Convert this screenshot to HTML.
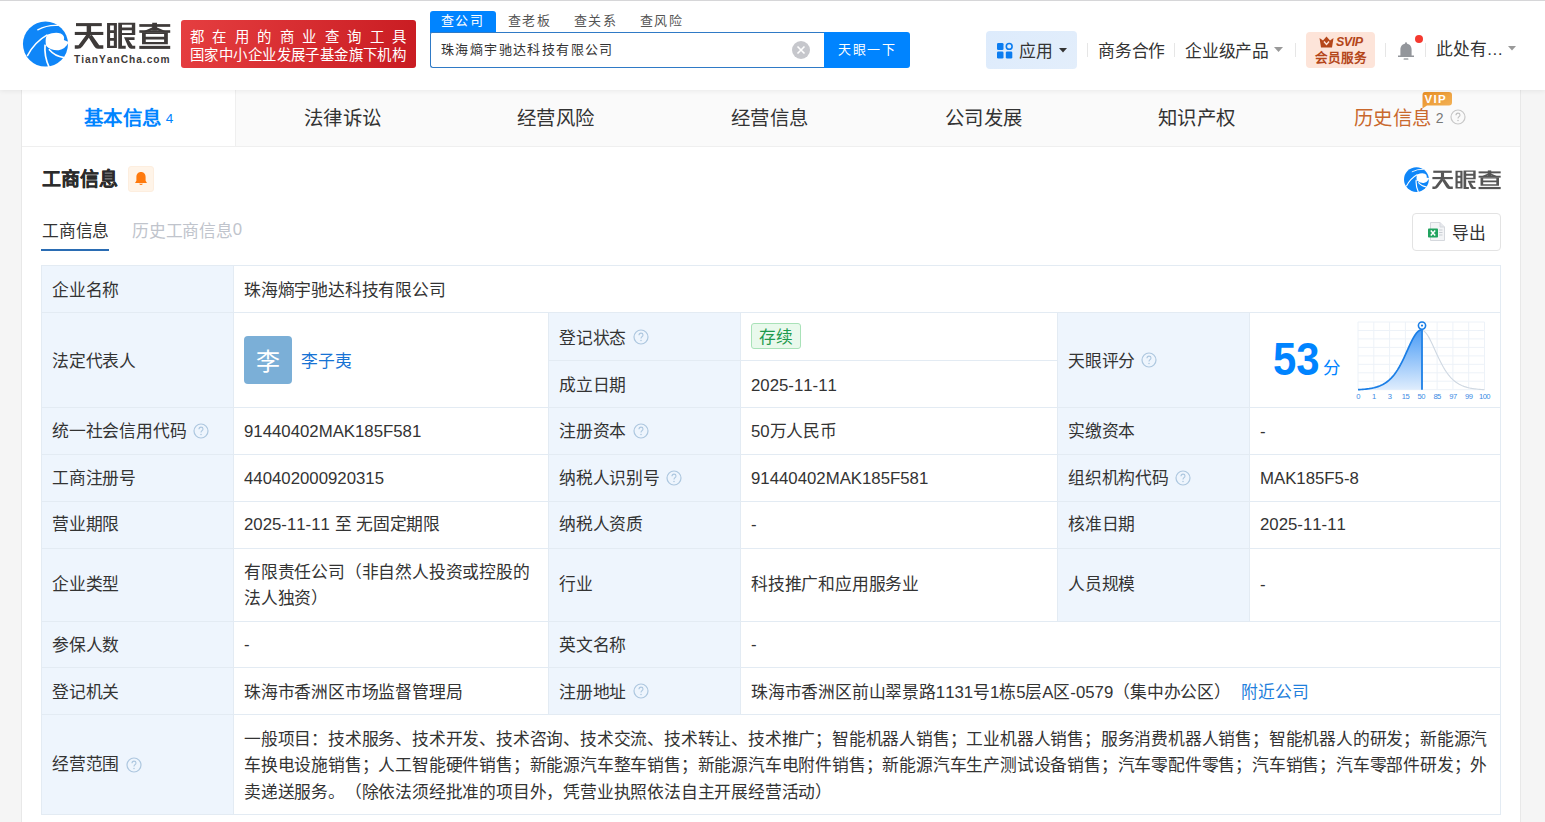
<!DOCTYPE html><html lang="zh-CN"><head><meta charset="utf-8"><title>天眼查</title><style>
*{margin:0;padding:0;box-sizing:border-box}
html,body{width:1545px;height:822px;overflow:hidden}
body{position:relative;background:#f5f5f5;text-spacing-trim:space-all;font-kerning:none;font-family:"Liberation Sans",sans-serif;color:#333;}
.a{position:absolute;white-space:nowrap}
.hdr{position:absolute;left:0;top:0;width:1545px;height:90px;background:#fff;box-shadow:0 1px 5px rgba(0,0,0,0.07);z-index:5}
.topl{position:absolute;left:0;top:0;width:1545px;height:1px;background:#d6d6d8;z-index:6}
.card{position:absolute;left:21px;top:90px;width:1500px;height:740px;background:#fff;border-left:1px solid #e8e8e8;border-right:1px solid #e8e8e8}
.lbl{position:absolute;background:#eef5fd}
.ln{position:absolute;background:#e3ebf3}
.q{position:absolute;width:16px;height:16px;border:1.2px solid #b9d1e8;border-radius:50%}
.q:after{content:"?";position:absolute;left:0;top:0;width:100%;text-align:center;font-size:11px;line-height:13.5px;color:#b9d1e8}
.t{position:absolute;white-space:nowrap;font-size:16.8px;line-height:20px;color:#333}
.c{letter-spacing:-0.2px;position:relative;top:1.5px}
.ct{letter-spacing:-0.2px;position:relative;top:0.3px}
.sep{position:absolute;width:1px;height:14px;background:#e6e6e6;top:43px}
</style></head><body>
<div class="hdr">
<div class="topl"></div>
<svg class="a" style="left:18px;top:17px" width="56" height="54" viewBox="0 0 852 822">
<circle cx="418" cy="412" r="343" fill="#0f86f8"/>
<path d="M300 195 Q450 115 610 128" stroke="#fff" stroke-width="20" fill="none" stroke-linecap="round"/>
<path d="M440 272 Q560 222 650 250 Q718 280 698 352 L770 380 L770 390 Q720 490 620 505 Q510 515 430 440 Q405 360 440 272 Z" fill="#fff"/>
<path d="M140 595 Q250 380 445 272" stroke="#fff" stroke-width="24" fill="none"/>
<path d="M412 420 Q395 600 475 765" stroke="#fff" stroke-width="26" fill="none"/>
<path d="M470 492 Q560 600 700 618" stroke="#fff" stroke-width="24" fill="none"/>
</svg>
<svg class="a" style="left:70px;top:18px" width="105" height="50" viewBox="0 0 1545 736"><g fill="#3e3a39">
<rect x="88" y="75" width="380" height="45"/>
<rect x="70" y="205" width="420" height="45"/>
<rect x="245" y="110" width="65" height="110"/>
<path d="M245 240 L315 240 L185 415 Q160 452 115 452 L70 452 L70 402 L125 402 Z"/>
<path d="M270 280 L320 245 L430 402 L490 402 L490 452 L410 452 Q380 452 355 415 Z"/>
<path fill-rule="evenodd" d="M545 75 H690 V440 H545 Z M590 110 V180 H645 V110 Z M590 220 V295 H645 V220 Z M590 335 V410 H645 V335 Z"/>
<path fill-rule="evenodd" d="M710 70 H960 V250 H765 V410 H820 V452 H710 Z M765 100 V140 H910 V100 Z M765 180 V220 H910 V180 Z"/>
<path d="M795 282 H950 V322 H865 L920 410 H960 V452 H900 Q875 452 855 420 Z"/>
<rect x="1020" y="90" width="455" height="40"/>
<rect x="1210" y="70" width="70" height="115"/>
<path d="M1215 135 L1255 160 L1120 212 L1040 212 Z"/>
<path d="M1275 135 L1235 160 L1370 212 L1450 212 Z"/>
<rect x="1020" y="180" width="455" height="38"/>
<path fill-rule="evenodd" d="M1060 215 H1440 V385 H1060 Z M1115 235 V275 H1385 V235 Z M1115 315 V355 H1385 V315 Z"/>
<rect x="1020" y="410" width="455" height="45"/>
</g></svg>
<div class="a" style="left:74px;top:53.5px;font-size:10.2px;line-height:12px;font-weight:bold;color:#3e3a39;letter-spacing:1.0px">TianYanCha.com</div>
<div class="a" style="left:181px;top:20px;width:235px;height:48px;border-radius:3px;background:linear-gradient(100deg,#e53e40,#c91c22)"></div>
<div class="a" style="left:190px;top:28px;width:216px;font-size:14.4px;line-height:19px;color:#fff;text-align:justify;text-align-last:justify">都 在 用 的 商 业 查 询 工 具</div>
<div class="a" style="left:190px;top:45.5px;font-size:14.4px;line-height:19px;color:#fff;letter-spacing:0.42px">国家中小企业发展子基金旗下机构</div>
<div class="a" style="left:430px;top:11px;width:66px;height:22px;background:#0084ff;border-radius:3px 3px 0 0"></div>
<div class="a" style="left:441px;top:11px;font-size:13px;letter-spacing:1.4px;line-height:20px;color:#fff">查公司</div>
<div class="a" style="left:508px;top:11px;font-size:13px;letter-spacing:1.4px;line-height:20px;color:#555">查老板</div>
<div class="a" style="left:574px;top:11px;font-size:13px;letter-spacing:1.4px;line-height:20px;color:#555">查关系</div>
<div class="a" style="left:640px;top:11px;font-size:13px;letter-spacing:1.4px;line-height:20px;color:#555">查风险</div>
<div class="a" style="left:430px;top:32px;width:395px;height:36px;border:1px solid #2f7ac6;border-right:none;border-radius:2px 0 0 3px;background:#fff"></div>
<div class="a" style="left:441px;top:40px;font-size:13px;letter-spacing:1.4px;line-height:20px;color:#333">珠海熵宇驰达科技有限公司</div>
<div class="a" style="left:792px;top:41px;width:18px;height:18px;border-radius:50%;background:#c6c7cc"></div>
<svg class="a" style="left:792px;top:41px" width="18" height="18"><path d="M5.5 5.5 L12.5 12.5 M12.5 5.5 L5.5 12.5" stroke="#fff" stroke-width="1.6"/></svg>
<div class="a" style="left:824px;top:32px;width:86px;height:36px;background:#0084ff;border-radius:0 3px 3px 0"></div>
<div class="a" style="left:838px;top:40px;font-size:13px;letter-spacing:1.6px;line-height:20px;color:#fff">天眼一下</div>
<div class="a" style="left:986px;top:31px;width:91px;height:38px;border-radius:4px;background:linear-gradient(135deg,#ddebfc,#e3eefb)"></div>
<svg class="a" style="left:996px;top:42px" width="18" height="17" viewBox="0 0 18 17">
<rect x="1" y="1" width="6.5" height="7" rx="1.3" fill="#0b7cf0"/>
<circle cx="13.2" cy="4.4" r="2.9" fill="none" stroke="#0b7cf0" stroke-width="1.6"/>
<rect x="1" y="9.5" width="6.5" height="7" rx="1.3" fill="#0b7cf0"/>
<rect x="9.8" y="9.5" width="6.5" height="7" rx="1.3" fill="#0b7cf0"/>
</svg>
<div class="a" style="left:1019px;top:40px;font-size:16.8px;line-height:20px;color:#333"><span class="c">应用</span></div>
<svg class="a" style="left:1059px;top:47.5px" width="8" height="5"><path d="M0 0 H8 L4 4.5 Z" fill="#333"/></svg>
<div class="sep" style="left:1087px"></div>
<div class="a" style="left:1098px;top:40px;font-size:16.8px;line-height:20px;color:#333"><span class="c">商务合作</span></div>
<div class="sep" style="left:1174px"></div>
<div class="a" style="left:1185px;top:40px;font-size:16.8px;line-height:20px;color:#333"><span class="c">企业级产品</span></div>
<svg class="a" style="left:1274px;top:47px" width="9" height="5"><path d="M0 0 H9 L4.5 5 Z" fill="#999"/></svg>
<div class="sep" style="left:1295px"></div>
<div class="a" style="left:1306px;top:32px;width:69px;height:36px;border-radius:4px;background:#fde4d9"></div>
<svg class="a" style="left:1319px;top:36px" width="15" height="12" viewBox="0 0 15 12">
<path d="M0.5 2 L4 4.5 L7.5 0.5 L11 4.5 L14.5 2 L13 11.5 H2 Z" fill="#b4461a"/>
<path d="M5 5.5 L7.5 8.5 L10 5.5" stroke="#fde4d9" stroke-width="1.4" fill="none"/>
</svg>
<div class="a" style="left:1336px;top:35px;font-size:12.5px;line-height:14px;font-weight:bold;font-style:italic;color:#b4461a;letter-spacing:-0.5px">SVIP</div>
<div class="a" style="left:1314.5px;top:51px;font-size:12.6px;line-height:15px;font-weight:bold;color:#b4461a">会员服务</div>
<div class="sep" style="left:1385px"></div>
<svg class="a" style="left:1397px;top:41px" width="18" height="20" viewBox="0 0 18 20">
<path d="M9 2.8 C5 2.8 3.4 5.5 3.4 8.8 V14.6 H1 V16 H17 V14.6 H14.6 V8.8 C14.6 5.5 13 2.8 9 2.8 Z" fill="#93969b"/><rect x="8" y="1.2" width="2" height="2.4" rx="1" fill="#93969b"/>
<rect x="6.6" y="17.3" width="4.8" height="1.5" rx="0.4" fill="#a3a6ab"/>
</svg>
<div class="a" style="left:1415px;top:35px;width:8px;height:8px;border-radius:50%;background:#f5392f"></div>
<div class="sep" style="left:1425px"></div>
<div class="a" style="left:1436px;top:38px;font-size:16.8px;line-height:20px;color:#333"><span class="c">此处有…</span></div>
<svg class="a" style="left:1508px;top:46px" width="8" height="5"><path d="M0 0 H8 L4 4.5 Z" fill="#999"/></svg>
</div>
<div class="card"></div>
<div class="a" style="left:22px;top:90px;width:1498px;height:57px;background:#fafafa;border-bottom:1px solid #efefef"></div>
<div class="a" style="left:22px;top:90px;width:214px;height:56px;background:#fff;border-right:1px solid #efefef"></div>
<div class="a" style="left:84px;top:105.5px;font-size:19.4px;letter-spacing:0.3px;line-height:24px;font-weight:bold;color:#0084ff">基本信息<span style="font-size:13.5px;font-weight:normal;margin-left:4.5px;letter-spacing:0;position:relative;top:-2px">4</span></div>
<div class="a" style="left:304px;top:105.5px;font-size:19.4px;letter-spacing:0.3px;line-height:24px;color:#333">法律诉讼</div>
<div class="a" style="left:517px;top:105.5px;font-size:19.4px;letter-spacing:0.3px;line-height:24px;color:#333">经营风险</div>
<div class="a" style="left:731px;top:105.5px;font-size:19.4px;letter-spacing:0.3px;line-height:24px;color:#333">经营信息</div>
<div class="a" style="left:945px;top:105.5px;font-size:19.4px;letter-spacing:0.3px;line-height:24px;color:#333">公司发展</div>
<div class="a" style="left:1158px;top:105.5px;font-size:19.4px;letter-spacing:0.3px;line-height:24px;color:#333">知识产权</div>
<div class="a" style="left:1354px;top:105.5px;font-size:19.4px;letter-spacing:0.3px;line-height:24px;color:#c9682d">历史信息<span style="font-size:14px;color:#777;margin-left:4.5px;letter-spacing:0;position:relative;top:-2px">2</span></div>
<div class="a" style="left:1450px;top:109px;width:16px;height:16px"><svg width="16" height="16" viewBox="0 0 16 16"><circle cx="8" cy="8" r="7" fill="none" stroke="#c8c8c8" stroke-width="1.2"/><path d="M6 6.2 Q6 4.1 8 4.1 Q10 4.1 10 5.9 Q10 7.1 8.9 7.7 Q8 8.2 8 9.6" fill="none" stroke="#c0c0c0" stroke-width="1.1"/><circle cx="8" cy="11.6" r="0.75" fill="#c0c0c0"/></svg></div>
<svg class="a" style="left:1421.5px;top:92px" width="30" height="17" viewBox="0 0 30 17"><defs><linearGradient id="vg" x1="0" y1="0" x2="1" y2="1"><stop offset="0" stop-color="#e98f25"/><stop offset="1" stop-color="#f3b45a"/></linearGradient></defs><path d="M3 0 H27 Q30 0 30 3 V10.5 Q30 13.5 27 13.5 H5 L0.5 16.5 V3 Q0.5 0 3 0 Z" fill="url(#vg)"/></svg>
<div class="a" style="left:1424.5px;top:92.5px;font-size:11.5px;line-height:13px;font-weight:bold;color:#fff;letter-spacing:1.3px">VIP</div>
<div class="a" style="left:42px;top:167.5px;font-size:19px;letter-spacing:0.1px;line-height:24px;font-weight:bold;color:#2b2b2b;-webkit-text-stroke:0.15px #2b2b2b">工商信息</div>
<div class="a" style="left:128px;top:166px;width:26px;height:26px;border-radius:3px;background:#fff4e8;border:1px solid #fdeedf"></div>
<svg class="a" style="left:134px;top:171px" width="14" height="15" viewBox="0 0 14 15">
<path d="M7 1 C4 1 2.4 3.3 2.4 6 V9.8 L1 12 H13 L11.6 9.8 V6 C11.6 3.3 10 1 7 1 Z" fill="#ff7a0d"/>
<path d="M5 12.8 Q7 15.2 9 12.8 Z" fill="#ff7a0d"/></svg>
<svg class="a" style="left:1404px;top:166.5px" width="25" height="25" viewBox="75 65 690 690">
<circle cx="418" cy="412" r="343" fill="#0f86f8"/>
<path d="M300 195 Q450 115 610 128" stroke="#fff" stroke-width="24" fill="none" stroke-linecap="round"/>
<path d="M440 272 Q560 222 650 250 Q718 280 698 352 L770 380 L770 390 Q720 490 620 505 Q510 515 430 440 Q405 360 440 272 Z" fill="#fff"/>
<path d="M140 595 Q250 380 445 272" stroke="#fff" stroke-width="30" fill="none"/>
<path d="M412 420 Q395 600 475 765" stroke="#fff" stroke-width="32" fill="none"/>
<path d="M470 492 Q560 600 700 618" stroke="#fff" stroke-width="30" fill="none"/>
</svg>
<svg class="a" style="left:1428.6px;top:166.9px" width="75.1" height="35.8" viewBox="0 0 1545 736"><g fill="#555">
<rect x="88" y="75" width="380" height="45"/>
<rect x="70" y="205" width="420" height="45"/>
<rect x="245" y="110" width="65" height="110"/>
<path d="M245 240 L315 240 L185 415 Q160 452 115 452 L70 452 L70 402 L125 402 Z"/>
<path d="M270 280 L320 245 L430 402 L490 402 L490 452 L410 452 Q380 452 355 415 Z"/>
<path fill-rule="evenodd" d="M545 75 H690 V440 H545 Z M590 110 V180 H645 V110 Z M590 220 V295 H645 V220 Z M590 335 V410 H645 V335 Z"/>
<path fill-rule="evenodd" d="M710 70 H960 V250 H765 V410 H820 V452 H710 Z M765 100 V140 H910 V100 Z M765 180 V220 H910 V180 Z"/>
<path d="M795 282 H950 V322 H865 L920 410 H960 V452 H900 Q875 452 855 420 Z"/>
<rect x="1020" y="90" width="455" height="40"/>
<rect x="1210" y="70" width="70" height="115"/>
<path d="M1215 135 L1255 160 L1120 212 L1040 212 Z"/>
<path d="M1275 135 L1235 160 L1370 212 L1450 212 Z"/>
<rect x="1020" y="180" width="455" height="38"/>
<path fill-rule="evenodd" d="M1060 215 H1440 V385 H1060 Z M1115 235 V275 H1385 V235 Z M1115 315 V355 H1385 V315 Z"/>
<rect x="1020" y="410" width="455" height="45"/>
</g></svg>
<div class="a" style="left:42px;top:220px;font-size:16.8px;line-height:20px;color:#333"><span class="c">工商信息</span></div>
<div class="a" style="left:132px;top:220px;font-size:16.8px;line-height:20px;color:#c0c4cc"><span class="c">历史工商信息</span>0</div>
<div class="a" style="left:41px;top:249px;width:68px;height:2px;background:#2a6cb3"></div>
<div class="a" style="left:1412px;top:213px;width:89px;height:38px;border:1px solid #e3e3e3;border-radius:4px;background:#fff"></div>
<svg class="a" style="left:1428px;top:222px" width="18" height="19" viewBox="0 0 18 19">
<path d="M2.5 0.5 H12 L16.5 5 V18.5 H2.5 Z" fill="#f3f4f6" stroke="#d5d8dd" stroke-width="1"/>
<path d="M12 0.5 V5 H16.5" fill="#e6e8ec" stroke="#d5d8dd" stroke-width="1"/>
<rect x="11" y="7.5" width="3.5" height="1" fill="#c9cdd3"/><rect x="11" y="10" width="3.5" height="1" fill="#c9cdd3"/><rect x="11" y="12.5" width="3.5" height="1" fill="#c9cdd3"/>
<rect x="0" y="6.5" width="10" height="9" rx="0.8" fill="#21a35f"/>
<path d="M2.8 8.6 L7.2 13.4 M7.2 8.6 L2.8 13.4" stroke="#fff" stroke-width="1.5"/>
</svg>
<div class="a" style="left:1452px;top:222px;font-size:16.8px;line-height:20px;color:#333"><span class="c">导出</span></div>
<div class="lbl" style="left:41px;top:265px;width:192px;height:549px"></div>
<div class="lbl" style="left:548px;top:312px;width:192px;height:402px"></div>
<div class="lbl" style="left:1057px;top:312px;width:192px;height:309px"></div>
<div class="ln" style="left:41px;top:265px;width:1460px;height:1px"></div>
<div class="ln" style="left:41px;top:312px;width:1460px;height:1px"></div>
<div class="ln" style="left:41px;top:407px;width:1460px;height:1px"></div>
<div class="ln" style="left:41px;top:454px;width:1460px;height:1px"></div>
<div class="ln" style="left:41px;top:501px;width:1460px;height:1px"></div>
<div class="ln" style="left:41px;top:548px;width:1460px;height:1px"></div>
<div class="ln" style="left:41px;top:621px;width:1460px;height:1px"></div>
<div class="ln" style="left:41px;top:667px;width:1460px;height:1px"></div>
<div class="ln" style="left:41px;top:714px;width:1460px;height:1px"></div>
<div class="ln" style="left:41px;top:814px;width:1460px;height:1px"></div>
<div class="ln" style="left:548px;top:360px;width:510px;height:1px"></div>
<div class="ln" style="left:41px;top:265px;width:1px;height:550px"></div>
<div class="ln" style="left:1500px;top:265px;width:1px;height:550px"></div>
<div class="ln" style="left:233px;top:265px;width:1px;height:550px"></div>
<div class="ln" style="left:548px;top:312px;width:1px;height:403px"></div>
<div class="ln" style="left:740px;top:312px;width:1px;height:403px"></div>
<div class="ln" style="left:1057px;top:312px;width:1px;height:310px"></div>
<div class="ln" style="left:1249px;top:312px;width:1px;height:310px"></div>
<div class="t" style="left:52px;top:280.90px;"><span class="ct">企业名称</span></div>
<div class="t" style="left:244px;top:280.90px;"><span class="ct">珠海熵宇驰达科技有限公司</span></div>
<div class="t" style="left:52px;top:352.15px;"><span class="ct">法定代表人</span></div>
<div class="a" style="left:244px;top:336px;width:48px;height:48px;border-radius:4px;background:#7bafd7;color:#fff;font-size:24px;line-height:51px;text-align:center">李</div>
<div class="t" style="left:301px;top:352.15px;color:#1773d4"><span class="ct">李子夷</span></div>
<div class="t" style="left:559px;top:328.70px;"><span class="ct">登记状态</span></div>
<div class="a" style="left:632.8px;top:328.7px;width:16px;height:16px"><svg width="16" height="16" viewBox="0 0 16 16"><circle cx="8" cy="8" r="7" fill="none" stroke="#adc7df" stroke-width="1.2"/><path d="M6 6.2 Q6 4.1 8 4.1 Q10 4.1 10 5.9 Q10 7.1 8.9 7.7 Q8 8.2 8 9.6" fill="none" stroke="#adc7df" stroke-width="1.1"/><circle cx="8" cy="11.6" r="0.75" fill="#adc7df"/></svg></div>
<div class="a" style="left:751px;top:323px;width:50px;height:26px;border-radius:3px;background:#e9f9ec;border:1px solid #a9e2b8"></div>
<div class="t" style="left:759px;top:326.5px;color:#1e9a4d"><span class="c">存续</span></div>
<div class="t" style="left:559px;top:375.70px;"><span class="ct">成立日期</span></div>
<div class="t" style="left:751px;top:375.70px;">2025-11-11</div>
<div class="t" style="left:1068px;top:352.15px;"><span class="ct">天眼评分</span></div>
<div class="a" style="left:1140.8px;top:352.2px;width:16px;height:16px"><svg width="16" height="16" viewBox="0 0 16 16"><circle cx="8" cy="8" r="7" fill="none" stroke="#adc7df" stroke-width="1.2"/><path d="M6 6.2 Q6 4.1 8 4.1 Q10 4.1 10 5.9 Q10 7.1 8.9 7.7 Q8 8.2 8 9.6" fill="none" stroke="#adc7df" stroke-width="1.1"/><circle cx="8" cy="11.6" r="0.75" fill="#adc7df"/></svg></div>
<div class="t" style="left:52px;top:421.60px;"><span class="ct">统一社会信用代码</span></div>
<div class="a" style="left:192.8px;top:423.2px;width:16px;height:16px"><svg width="16" height="16" viewBox="0 0 16 16"><circle cx="8" cy="8" r="7" fill="none" stroke="#adc7df" stroke-width="1.2"/><path d="M6 6.2 Q6 4.1 8 4.1 Q10 4.1 10 5.9 Q10 7.1 8.9 7.7 Q8 8.2 8 9.6" fill="none" stroke="#adc7df" stroke-width="1.1"/><circle cx="8" cy="11.6" r="0.75" fill="#adc7df"/></svg></div>
<div class="t" style="left:244px;top:421.60px;">91440402MAK185F581</div>
<div class="t" style="left:559px;top:421.60px;"><span class="ct">注册资本</span></div>
<div class="a" style="left:632.8px;top:423.2px;width:16px;height:16px"><svg width="16" height="16" viewBox="0 0 16 16"><circle cx="8" cy="8" r="7" fill="none" stroke="#adc7df" stroke-width="1.2"/><path d="M6 6.2 Q6 4.1 8 4.1 Q10 4.1 10 5.9 Q10 7.1 8.9 7.7 Q8 8.2 8 9.6" fill="none" stroke="#adc7df" stroke-width="1.1"/><circle cx="8" cy="11.6" r="0.75" fill="#adc7df"/></svg></div>
<div class="t" style="left:751px;top:421.60px;">50<span class="ct">万人民币</span></div>
<div class="t" style="left:1068px;top:421.60px;"><span class="ct">实缴资本</span></div>
<div class="t" style="left:1260px;top:421.60px;">-</div>
<div class="t" style="left:52px;top:469.00px;"><span class="ct">工商注册号</span></div>
<div class="t" style="left:244px;top:469.00px;">440402000920315</div>
<div class="t" style="left:559px;top:469.00px;"><span class="ct">纳税人识别号</span></div>
<div class="a" style="left:666.3px;top:470.2px;width:16px;height:16px"><svg width="16" height="16" viewBox="0 0 16 16"><circle cx="8" cy="8" r="7" fill="none" stroke="#adc7df" stroke-width="1.2"/><path d="M6 6.2 Q6 4.1 8 4.1 Q10 4.1 10 5.9 Q10 7.1 8.9 7.7 Q8 8.2 8 9.6" fill="none" stroke="#adc7df" stroke-width="1.1"/><circle cx="8" cy="11.6" r="0.75" fill="#adc7df"/></svg></div>
<div class="t" style="left:751px;top:469.00px;">91440402MAK185F581</div>
<div class="t" style="left:1068px;top:469.00px;"><span class="ct">组织机构代码</span></div>
<div class="a" style="left:1174.9px;top:470.2px;width:16px;height:16px"><svg width="16" height="16" viewBox="0 0 16 16"><circle cx="8" cy="8" r="7" fill="none" stroke="#adc7df" stroke-width="1.2"/><path d="M6 6.2 Q6 4.1 8 4.1 Q10 4.1 10 5.9 Q10 7.1 8.9 7.7 Q8 8.2 8 9.6" fill="none" stroke="#adc7df" stroke-width="1.1"/><circle cx="8" cy="11.6" r="0.75" fill="#adc7df"/></svg></div>
<div class="t" style="left:1260px;top:469.00px;">MAK185F5-8</div>
<div class="t" style="left:52px;top:515.20px;"><span class="ct">营业期限</span></div>
<div class="t" style="left:244px;top:515.20px;">2025-11-11 <span class="ct">至</span> <span class="ct">无固定期限</span></div>
<div class="t" style="left:559px;top:515.20px;"><span class="ct">纳税人资质</span></div>
<div class="t" style="left:751px;top:515.20px;">-</div>
<div class="t" style="left:1068px;top:515.20px;"><span class="ct">核准日期</span></div>
<div class="t" style="left:1260px;top:515.20px;">2025-11-11</div>
<div class="t" style="left:52px;top:575.15px;"><span class="ct">企业类型</span></div>
<div class="t" style="left:244px;top:558.0px;line-height:26px"><span class="c">有限责任公司（非自然人投资或控股的</span><br><span class="c">法人独资）</span></div>
<div class="t" style="left:559px;top:575.15px;"><span class="ct">行业</span></div>
<div class="t" style="left:751px;top:575.15px;"><span class="ct">科技推广和应用服务业</span></div>
<div class="t" style="left:1068px;top:575.15px;"><span class="ct">人员规模</span></div>
<div class="t" style="left:1260px;top:575.15px;">-</div>
<div class="t" style="left:52px;top:635.30px;"><span class="ct">参保人数</span></div>
<div class="t" style="left:244px;top:635.30px;">-</div>
<div class="t" style="left:559px;top:635.30px;"><span class="ct">英文名称</span></div>
<div class="t" style="left:751px;top:635.30px;">-</div>
<div class="t" style="left:52px;top:682.90px;"><span class="ct">登记机关</span></div>
<div class="t" style="left:244px;top:682.90px;"><span class="ct">珠海市香洲区市场监督管理局</span></div>
<div class="t" style="left:559px;top:682.90px;"><span class="ct">注册地址</span></div>
<div class="a" style="left:632.8px;top:683.2px;width:16px;height:16px"><svg width="16" height="16" viewBox="0 0 16 16"><circle cx="8" cy="8" r="7" fill="none" stroke="#adc7df" stroke-width="1.2"/><path d="M6 6.2 Q6 4.1 8 4.1 Q10 4.1 10 5.9 Q10 7.1 8.9 7.7 Q8 8.2 8 9.6" fill="none" stroke="#adc7df" stroke-width="1.1"/><circle cx="8" cy="11.6" r="0.75" fill="#adc7df"/></svg></div>
<div class="t" style="left:751px;top:682.90px;"><span class="ct">珠海市香洲区前山翠景路</span>1131<span class="ct">号</span>1<span class="ct">栋</span>5<span class="ct">层</span>A<span class="ct">区</span>-0579<span class="ct">（集中办公区）</span><span style="color:#1f7fdc;margin-left:10.5px"><span class="ct">附近公司</span></span></div>
<div class="t" style="left:52px;top:754.90px;"><span class="ct">经营范围</span></div>
<div class="a" style="left:125.5px;top:756.7px;width:16px;height:16px"><svg width="16" height="16" viewBox="0 0 16 16"><circle cx="8" cy="8" r="7" fill="none" stroke="#adc7df" stroke-width="1.2"/><path d="M6 6.2 Q6 4.1 8 4.1 Q10 4.1 10 5.9 Q10 7.1 8.9 7.7 Q8 8.2 8 9.6" fill="none" stroke="#adc7df" stroke-width="1.1"/><circle cx="8" cy="11.6" r="0.75" fill="#adc7df"/></svg></div>
<div class="t" style="left:244px;top:725.0px;line-height:26.5px"><span class="c">一般项目：技术服务、技术开发、技术咨询、技术交流、技术转让、技术推广；智能机器人销售；工业机器人销售；服务消费机器人销售；智能机器人的研发；新能源汽</span><br><span class="c">车换电设施销售；人工智能硬件销售；新能源汽车整车销售；新能源汽车电附件销售；新能源汽车生产测试设备销售；汽车零配件零售；汽车销售；汽车零部件研发；外</span><br><span class="c">卖递送服务。（除依法须经批准的项目外，凭营业执照依法自主开展经营活动）</span></div>
<div class="a" style="left:1272.5px;top:334.5px;font-size:45.5px;line-height:50px;font-weight:bold;color:#0084ff;transform:scaleX(0.92);transform-origin:0 0">53</div>
<div class="a" style="left:1323px;top:358px;font-size:17.5px;line-height:20px;color:#0084ff">分</div>
<svg class="a" style="left:1350px;top:316px" width="145" height="88" viewBox="0 0 145 88"><defs><linearGradient id="gf" x1="0" y1="0" x2="0" y2="1"><stop offset="0" stop-color="#4a9cf6"/><stop offset="1" stop-color="#dfedfd"/></linearGradient></defs><g stroke="#edf2f8" stroke-width="1"><line x1="8.0" y1="6.0" x2="8.0" y2="73.7"/><line x1="23.8" y1="6.0" x2="23.8" y2="73.7"/><line x1="39.6" y1="6.0" x2="39.6" y2="73.7"/><line x1="55.4" y1="6.0" x2="55.4" y2="73.7"/><line x1="71.2" y1="6.0" x2="71.2" y2="73.7"/><line x1="87.1" y1="6.0" x2="87.1" y2="73.7"/><line x1="102.9" y1="6.0" x2="102.9" y2="73.7"/><line x1="118.7" y1="6.0" x2="118.7" y2="73.7"/><line x1="134.5" y1="6.0" x2="134.5" y2="73.7"/><line x1="8.0" y1="6.0" x2="134.5" y2="6.0"/><line x1="8.0" y1="14.5" x2="134.5" y2="14.5"/><line x1="8.0" y1="22.9" x2="134.5" y2="22.9"/><line x1="8.0" y1="31.4" x2="134.5" y2="31.4"/><line x1="8.0" y1="39.9" x2="134.5" y2="39.9"/><line x1="8.0" y1="48.3" x2="134.5" y2="48.3"/><line x1="8.0" y1="56.8" x2="134.5" y2="56.8"/><line x1="8.0" y1="65.2" x2="134.5" y2="65.2"/><line x1="8.0" y1="73.7" x2="134.5" y2="73.7"/></g><polygon points="8.00,73.70 9.58,73.61 11.16,73.50 12.74,73.38 14.32,73.24 15.91,73.07 17.49,72.88 19.07,72.66 20.65,72.40 22.23,72.10 23.81,71.75 25.39,71.35 26.97,70.89 28.56,70.36 30.14,69.75 31.72,69.04 33.30,68.23 34.88,67.30 36.46,66.24 38.04,65.04 39.62,63.67 41.21,62.12 42.79,60.37 44.37,58.42 45.95,56.25 47.53,53.85 49.11,51.22 50.69,48.36 52.27,45.30 53.86,42.05 55.44,38.66 57.02,35.17 58.60,31.66 60.18,28.21 61.76,24.92 63.34,21.88 64.93,19.21 66.51,17.01 68.09,15.36 69.67,14.34 71.25,14.00 72.0,73.7" fill="url(#gf)"/><polyline points="72.83,14.34 74.41,15.36 75.99,17.01 77.58,19.21 79.16,21.88 80.74,24.92 82.32,28.21 83.90,31.66 85.48,35.17 87.06,38.66 88.64,42.05 90.23,45.30 91.81,48.36 93.39,51.22 94.97,53.85 96.55,56.25 98.13,58.42 99.71,60.37 101.29,62.12 102.88,63.67 104.46,65.04 106.04,66.24 107.62,67.30 109.20,68.23 110.78,69.04 112.36,69.75 113.94,70.36 115.52,70.89 117.11,71.35 118.69,71.75 120.27,72.10 121.85,72.40 123.43,72.66 125.01,72.88 126.59,73.07 128.18,73.24 129.76,73.38 131.34,73.50 132.92,73.61 134.50,73.70" fill="none" stroke="#cfd8e2" stroke-width="1.1"/><polyline points="8.00,73.70 9.58,73.61 11.16,73.50 12.74,73.38 14.32,73.24 15.91,73.07 17.49,72.88 19.07,72.66 20.65,72.40 22.23,72.10 23.81,71.75 25.39,71.35 26.97,70.89 28.56,70.36 30.14,69.75 31.72,69.04 33.30,68.23 34.88,67.30 36.46,66.24 38.04,65.04 39.62,63.67 41.21,62.12 42.79,60.37 44.37,58.42 45.95,56.25 47.53,53.85 49.11,51.22 50.69,48.36 52.27,45.30 53.86,42.05 55.44,38.66 57.02,35.17 58.60,31.66 60.18,28.21 61.76,24.92 63.34,21.88 64.93,19.21 66.51,17.01 68.09,15.36 69.67,14.34 71.25,14.00" fill="none" stroke="#1a7ee6" stroke-width="1.7"/><line x1="72" y1="10" x2="72" y2="73.7" stroke="#1a7ee6" stroke-width="1.8"/><circle cx="72" cy="9.6" r="3.6" fill="#fff" stroke="#1a7ee6" stroke-width="1.6"/><circle cx="72" cy="9.6" r="1.1" fill="#1a7ee6"/><g font-size="7.6" letter-spacing="-0.6" fill="#3a8ae4" font-family="Liberation Sans,sans-serif"><text x="8.0" y="82.6" text-anchor="middle">0</text><text x="23.8" y="82.6" text-anchor="middle">1</text><text x="39.6" y="82.6" text-anchor="middle">3</text><text x="55.4" y="82.6" text-anchor="middle">15</text><text x="71.2" y="82.6" text-anchor="middle">50</text><text x="87.1" y="82.6" text-anchor="middle">85</text><text x="102.9" y="82.6" text-anchor="middle">97</text><text x="118.7" y="82.6" text-anchor="middle">99</text><text x="134.5" y="82.6" text-anchor="middle">100</text></g></svg>
</body></html>
